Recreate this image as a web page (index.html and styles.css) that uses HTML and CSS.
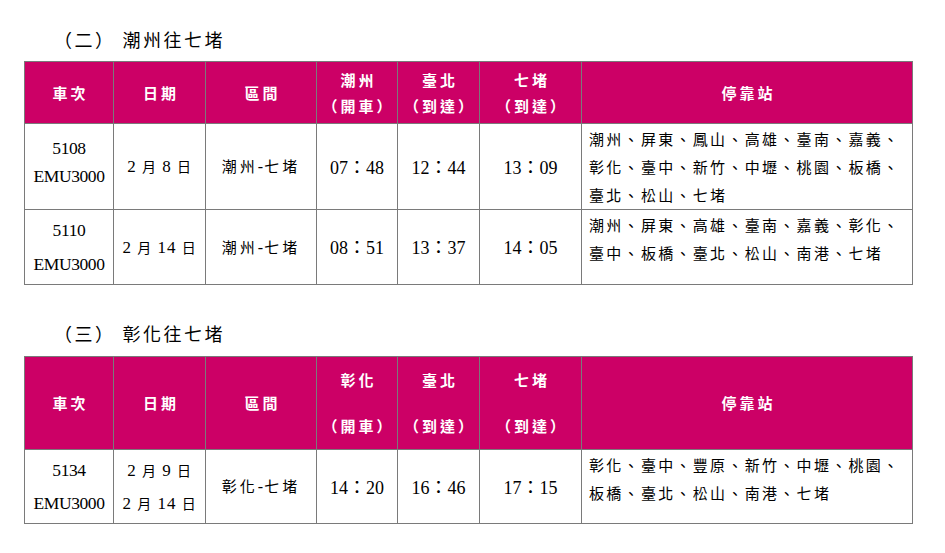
FILE: index.html
```html
<!DOCTYPE html>
<html lang="zh-Hant">
<head>
<meta charset="utf-8">
<title>加開列車時刻</title>
<link rel="stylesheet" href="styles.css">
</head>
<body>
<div class="page">
  <section class="sec sec-one">
    <h2 class="title">（二）<span class="title-name">潮州往七堵</span></h2>
    <table class="tbl">
      <colgroup>
        <col class="c1"><col class="c2"><col class="c3"><col class="c4"><col class="c5"><col class="c6"><col class="c7">
      </colgroup>
      <thead>
        <tr class="head head-a">
          <th>車次</th>
          <th>日期</th>
          <th>區間</th>
          <th><div>潮州</div><div>（開車）</div></th>
          <th><div>臺北</div><div>（到達）</div></th>
          <th><div>七堵</div><div>（到達）</div></th>
          <th>停靠站</th>
        </tr>
      </thead>
      <tbody>
        <tr class="row r1">
          <td class="num"><div class="stack-up"><div class="ln ln28">5108</div><div class="ln ln28">EMU3000</div></div></td>
          <td class="date">2 <span class="cj">月</span> 8 <span class="cj">日</span></td>
          <td class="route">潮州<span class="dash">-</span>七堵</td>
          <td class="time">07<span class="colon">：</span>48</td>
          <td class="time">12<span class="colon">：</span>44</td>
          <td class="time">13<span class="colon">：</span>09</td>
          <td class="stops">潮州、屏東、鳳山、高雄、臺南、嘉義、<br>彰化、臺中、新竹、中壢、桃園、板橋、<br>臺北、松山、七堵</td>
        </tr>
        <tr class="row r2">
          <td class="num"><div class="ln ln35">5110</div><div class="ln ln35">EMU3000</div></td>
          <td class="date">2 <span class="cj">月</span> 14 <span class="cj">日</span></td>
          <td class="route">潮州<span class="dash">-</span>七堵</td>
          <td class="time">08<span class="colon">：</span>51</td>
          <td class="time">13<span class="colon">：</span>37</td>
          <td class="time">14<span class="colon">：</span>05</td>
          <td class="stops">潮州、屏東、高雄、臺南、嘉義、彰化、<br>臺中、板橋、臺北、松山、南港、七堵</td>
        </tr>
      </tbody>
    </table>
  </section>

  <section class="sec sec-two">
    <h2 class="title">（三）<span class="title-name">彰化往七堵</span></h2>
    <table class="tbl">
      <colgroup>
        <col class="c1"><col class="c2"><col class="c3"><col class="c4"><col class="c5"><col class="c6"><col class="c7">
      </colgroup>
      <thead>
        <tr class="head head-b">
          <th>車次</th>
          <th>日期</th>
          <th>區間</th>
          <th><div>彰化</div><div>（開車）</div></th>
          <th><div>臺北</div><div>（到達）</div></th>
          <th><div>七堵</div><div>（到達）</div></th>
          <th>停靠站</th>
        </tr>
      </thead>
      <tbody>
        <tr class="row r3">
          <td class="num"><div class="ln ln33">5134</div><div class="ln ln33">EMU3000</div></td>
          <td class="date"><div class="ln ln33">2 <span class="cj">月</span> 9 <span class="cj">日</span></div><div class="ln ln33">2 <span class="cj">月</span> 14 <span class="cj">日</span></div></td>
          <td class="route">彰化<span class="dash">-</span>七堵</td>
          <td class="time">14<span class="colon">：</span>20</td>
          <td class="time">16<span class="colon">：</span>46</td>
          <td class="time">17<span class="colon">：</span>15</td>
          <td class="stops">彰化、臺中、豐原、新竹、中壢、桃園、<br>板橋、臺北、松山、南港、七堵</td>
        </tr>
      </tbody>
    </table>
  </section>
</div>
</body>
</html>
```

FILE: styles.css
```css
html, body {
  margin: 0;
  padding: 0;
  background: #ffffff;
}

body {
  font-family: "Liberation Serif", "Noto Sans CJK TC", serif;
  color: #000000;
}

.page {
  padding: 27px 0 0 24px;
  width: 888px;
}

.sec-two {
  margin-top: 36px;
}

.title {
  margin: 0 0 10px 0;
  padding-left: 30px;
  font-family: "Noto Sans CJK TC", sans-serif;
  font-weight: 400;
  font-size: 18px;
  line-height: 24px;
  letter-spacing: 2.5px;
  height: 24px;
}

.sec-two .title {
  margin-bottom: 11px;
}

.title-name {
  margin-left: 7px;
}

.tbl {
  border-collapse: collapse;
  table-layout: fixed;
  width: 888px;
}

.c1 { width: 89px; }
.c2 { width: 92px; }
.c3 { width: 111px; }
.c4 { width: 81px; }
.c5 { width: 82px; }
.c6 { width: 102px; }
.c7 { width: 331px; }

.tbl th,
.tbl td {
  border: 1px solid #7a7a7a;
  padding: 0;
  text-align: center;
  vertical-align: middle;
  line-height: 24px;
}

.head th {
  background: #cc0066;
  color: #ffffff;
  font-family: "Noto Sans CJK TC", sans-serif;
  font-weight: 700;
  font-size: 15px;
  letter-spacing: 3px;
  padding-left: 3px;
}

.head-a th {
  height: 61px;
  line-height: 26px;
}

.head-b th {
  height: 92px;
  line-height: 46px;
}

.r1 td { height: 84px; }
.r2 td { height: 73px; }
.r3 td { height: 72px; }

.num {
  font-size: 17.5px;
  letter-spacing: -0.4px;
}

.stack-up {
  padding-bottom: 9px;
}

.ln28 { line-height: 28px; }
.ln35 { line-height: 34px; }
.ln33 { line-height: 33px; }

.date {
  font-size: 17px;
  letter-spacing: 1px;
}

.cj {
  font-family: "Noto Sans CJK TC", sans-serif;
  font-size: 14px;
}

.route {
  font-family: "Noto Sans CJK TC", sans-serif;
  font-size: 15px;
  letter-spacing: 3px;
  padding-left: 3px;
}

.dash {
  font-family: "Liberation Serif", serif;
  font-size: 16px;
  letter-spacing: 1px;
}

.time {
  font-size: 18px;
}

.colon {
  font-family: "Noto Sans CJK TC", sans-serif;
  font-size: 18px;
}

.tbl td.stops {
  text-align: left;
  vertical-align: top;
  font-family: "Noto Sans CJK TC", sans-serif;
  font-size: 15px;
  letter-spacing: 2.3px;
  line-height: 28px;
  padding: 1px 4px 0 7px;
  white-space: nowrap;
}
```
